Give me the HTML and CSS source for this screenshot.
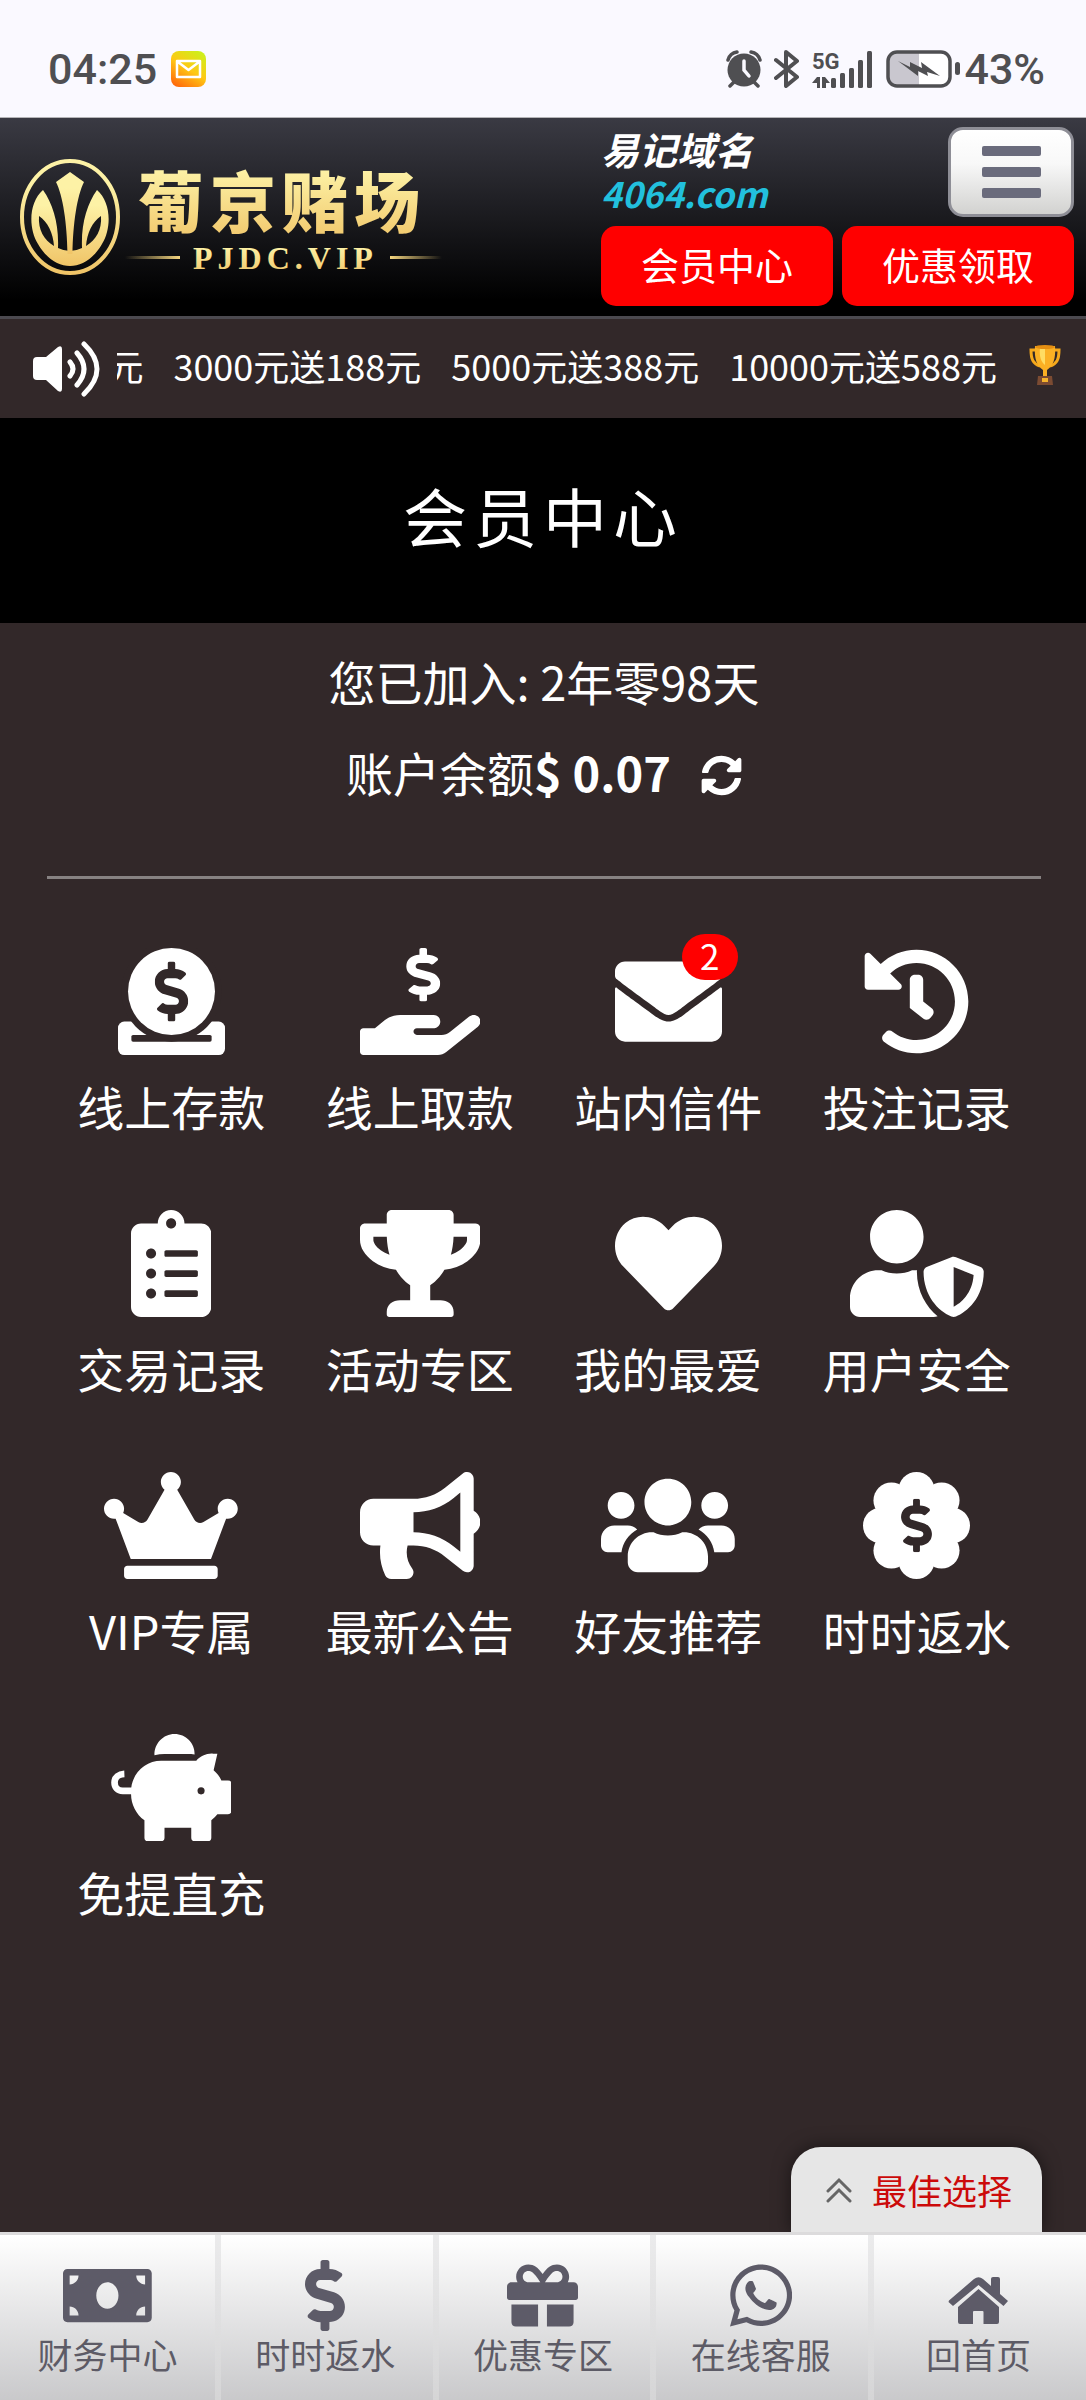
FILE: index.html
```html
<!DOCTYPE html>
<html lang="zh-CN">
<head>
  <meta charset="UTF-8">
  <meta name="viewport" content="width=device-width, initial-scale=1.0">
  <title>会员中心</title>
  <link rel="stylesheet" href="styles.css">
</head>
<body>
  <svg class="sprite" aria-hidden="true">
    <symbol id="dollar" viewBox="0 0 288 512" preserveAspectRatio="none"><path d="M209.2 233.4l-108-31.6C88.7 198.2 80 186.5 80 173.5c0-16.3 13.2-29.5 29.5-29.5h66.3c12.2 0 24.2 3.7 34.2 10.5 6.1 4.1 14.3 3.1 19.5-2l34.8-34c7.1-6.9 6.1-18.4-1.8-24.5C238 74.8 207.4 64.1 176 64V16c0-8.800-7.200-16-16-16h-32c-8.800 0-16 7.200-16 16v48h-2.500C45.800 64-5.400 118.700.500 183.600c4.200 46.100 39.400 83.600 83.800 96.600l102.500 30c12.500 3.700 21.200 15.300 21.200 28.300 0 16.300-13.200 29.500-29.500 29.500h-66.300C100 368 88 364.300 78 357.500c-6.100-4.100-14.300-3.100-19.500 2l-34.800 34c-7.100 6.900-6.100 18.400 1.800 24.500 24.500 19.200 55.100 29.900 86.500 30v48c0 8.800 7.200 16 16 16h32c8.800 0 16-7.200 16-16v-48.200c46.600-.9 90.300-28.600 105.700-72.700 21.500-61.600-14.600-124.800-72.500-141.700z"/></symbol>
  </svg>

  <div class="status-bar">
    <div class="status-left">
      <span>04:25</span>
      <svg width="35" height="36" viewBox="0 0 35 36">
        <defs>
          <linearGradient id="mailBg" x1="0.2" y1="1" x2="0.8" y2="0">
            <stop offset="0" stop-color="#ff6a0c"/>
            <stop offset="0.5" stop-color="#ffc814"/>
            <stop offset="1" stop-color="#cdf01c"/>
          </linearGradient>
        </defs>
        <rect width="35" height="36" rx="8" fill="url(#mailBg)"/>
        <path d="M6 10h23v16H6zM7 11l10.500 8L28 11" fill="none" stroke="#fff" stroke-width="2.500" stroke-linejoin="round"/>
      </svg>
    </div>
    <div class="status-right">
      <svg width="36" height="38" viewBox="0 0 36 38">
        <circle cx="18" cy="20" r="16.500"/>
        <path d="M2 10Q4 3 11 2M34 10Q32 3 25 2M8 32l-4 4M28 32l4 4" fill="none" stroke="#4f4f52" stroke-width="3.500" stroke-linecap="round"/>
        <path d="M18 11v9l5 6" fill="none" stroke="#faf9ff" stroke-width="3.500" stroke-linecap="round"/>
      </svg>
      <svg width="26" height="38" viewBox="0 0 26 38"><path d="M2 10l21 17-11 9V2l11 9L2 28" fill="none" stroke="#4f4f52" stroke-width="4" stroke-linejoin="round" stroke-linecap="round"/></svg>
      <svg width="62" height="38" viewBox="0 0 62 38">
        <text x="0" y="19" class="net-type">5G</text>
        <path d="M0 33l5-6h3v11H5v-5zM10 27h3l5 6h-4v5h-4z"/>
        <rect x="19" y="28" width="5" height="10" rx="1.500"/>
        <rect x="28" y="23" width="5" height="15" rx="1.500"/>
        <rect x="37" y="18" width="5" height="20" rx="1.500"/>
        <rect x="46" y="10" width="5" height="28" rx="1.500"/>
        <rect x="55" y="1" width="5" height="37" rx="1.500"/>
      </svg>
      <svg class="battery" width="76" height="38" viewBox="0 0 76 38">
        <rect x="2" y="2" width="62" height="34" rx="9" fill="#fff"/>
        <path d="M33 2H11a9 9 0 0 0-9 9v16a9 9 0 0 0 9 9h22z" fill="#c9c7cf"/>
        <rect x="2" y="2" width="62" height="34" rx="9" fill="none" stroke="#4f4f52" stroke-width="3.500"/>
        <rect x="69" y="12" width="5" height="13" rx="2.500"/>
        <path d="M12 11l12 6v-5l12 6-1-6 19 14-13-4 1 4-10-5v5z"/>
      </svg>
      <span>43%</span>
    </div>
  </div>

  <header class="header">
    <a class="logo" href="#">
      <svg width="450" height="198" viewBox="0 0 450 198">
        <defs>
          <linearGradient id="gold" x1="0" y1="0" x2="0" y2="1">
            <stop offset="0.2" stop-color="#fdf2a6"/>
            <stop offset="1" stop-color="#f0c467"/>
          </linearGradient>
          <linearGradient id="lineL"><stop offset="0" stop-color="#f5d680" stop-opacity="0"/><stop offset="1" stop-color="#f5d680"/></linearGradient>
          <linearGradient id="lineR"><stop offset="0" stop-color="#f5d680"/><stop offset="1" stop-color="#f5d680" stop-opacity="0"/></linearGradient>
        </defs>
        <ellipse cx="70" cy="99" rx="48" ry="56" fill="none" stroke="url(#gold)" stroke-width="4"/>
        <path fill="url(#gold)" d="M43 72C29 84 28 110 38 126C46 140 58 148 70 148C82 148 94 140 102 126C112 110 111 84 97 72C87 86 81 106 82 130Q70 136 58 130C59 106 53 86 43 72z"/>
        <path fill="#17171a" d="M39 98C38 112 44 122 54 128C53 115 48 104 39 98zM101 98C102 112 96 122 86 128C87 115 92 104 101 98z"/>
        <path fill="url(#gold)" d="M70 54L84 64C77 78 73 105 72.500 136H67.500C67 105 63 78 56 64z"/>
        <text class="logo-name" x="138" y="109" fill="url(#gold)">葡京赌场</text>
        <text class="logo-domain" x="193" y="151" fill="url(#gold)">PJDC.VIP</text>
        <rect x="125" y="138" width="55" height="3" fill="url(#lineL)"/>
        <rect x="390" y="138" width="52" height="3" fill="url(#lineR)"/>
      </svg>
    </a>
    <div class="header-side">
      <div class="header-top">
        <div class="domain">
          <div>易记域名</div>
          <div class="domain-url">4064.com</div>
        </div>
        <button class="menu-btn" type="button" aria-label="菜单"><span></span><span></span><span></span></button>
      </div>
      <div class="header-links">
        <a class="red-btn" href="#">会员中心</a>
        <a class="red-btn" href="#">优惠领取</a>
      </div>
    </div>
  </header>

  <div class="notice">
    <svg width="68" height="56" viewBox="0 0 68 56">
      <path fill="#fff" d="M4 16h9L25 6q4-2 4 2v40q0 4-4 2L13 39H4q-4 0-4-4V20q0-4 4-4z"/>
      <path fill="none" stroke="#fff" stroke-width="5" stroke-linecap="round" d="M37 21q6 7 0 14M44 12q14 16 0 32M51 3q26 25 0 50"/>
    </svg>
    <div class="notice-text">
      <span>元</span>
      <span>3000元送188元</span>
      <span>5000元送388元</span>
      <span>10000元送588元</span>
      <svg width="36" height="42" viewBox="0 0 36 42">
        <path d="M9 6H4c0 9 2 14 9 16M27 6h5c0 9-2 14-9 16" fill="none" stroke="#f5a81c" stroke-width="3"/>
        <path d="M8 2h20c1 13-2 20-8 24v7h-4v-7C10 22 7 15 8 2z" fill="#fbb024"/>
        <path d="M13 4h5v17c-4-3-6-9-5-17z" fill="#ffdc62"/>
        <ellipse cx="18" cy="3" rx="10" ry="2" fill="#e58f12"/>
        <path d="M11 32h14l1 9H10z" fill="#7c4b32"/>
        <rect x="15" y="34" width="6" height="4" fill="#f6b32c"/>
      </svg>
    </div>
  </div>

  <h1 class="page-title">会员中心</h1>

  <main class="content">
    <p class="info">您已加入: 2年零98天</p>
    <p class="info">账户余额<b>$ 0.07</b>
      <button class="refresh" type="button" aria-label="刷新">
        <svg width="41" height="41" viewBox="0 0 512 512"><path d="M370.720 133.280C339.458 104.008 298.888 87.962 255.848 88c-77.458.068-144.328 53.178-162.791 126.850-1.344 5.363-6.122 9.150-11.651 9.150H24.103c-7.498 0-13.194-6.807-11.807-14.176C33.933 94.924 134.813 8 256 8c66.448 0 126.791 26.136 171.315 68.685L463.030 40.970C478.149 25.851 504 36.559 504 57.941V192c0 13.255-10.745 24-24 24H345.941c-21.382 0-32.090-25.851-16.971-40.971l41.750-41.749zM32 296h134.059c21.382 0 32.090 25.851 16.971 40.971l-41.750 41.750c31.262 29.273 71.835 45.319 114.876 45.280 77.418-.07 144.315-53.144 162.787-126.849 1.344-5.363 6.122-9.150 11.651-9.150h57.304c7.498 0 13.194 6.807 11.807 14.176C478.067 417.076 377.187 504 256 504c-66.448 0-126.791-26.136-171.315-68.685L48.970 471.030C33.851 486.149 8 475.441 8 454.059V320c0-13.255 10.745-24 24-24z"/></svg>
      </button>
    </p>
    <hr class="divider">

    <nav class="menu">
      <a class="menu-item" href="#">
        <svg viewBox="0 0 512 512">
          <rect y="352" width="512" height="160" rx="30"/>
          <circle class="cut" cx="256" cy="208" r="240"/>
          <rect class="cut" x="64" y="416" width="384" height="32" rx="8"/>
          <path d="M138 416h236v-20H138z" class="cut"/>
          <circle cx="256" cy="208" r="208"/>
          <use class="cut" href="#dollar" x="176" y="64" width="160" height="288"/>
        </svg>
        <span>线上存款</span>
      </a>
      <a class="menu-item" href="#">
        <svg viewBox="0 0 576 512">
          <path d="M565.300 328.100c-11.800-10.700-30.200-10-42.600 0L430.300 402c-11.300 9.100-25.400 14-40 14H272c-8.800 0-16-7.200-16-16s7.200-16 16-16h78.300c15.900 0 30.700-10.900 33.300-26.600 3.300-20-12.100-37.400-31.600-37.400H192c-27 0-53.100 9.300-74.100 26.300L71.400 384H16c-8.800 0-16 7.200-16 16v96c0 8.800 7.200 16 16 16h356.800c14.500 0 28.600-4.900 40-14L564 377c15.200-12.100 16.400-35.300 1.300-48.900z"/>
          <use href="#dollar" x="221" y="0" width="163" height="256"/>
        </svg>
        <span>线上取款</span>
      </a>
      <a class="menu-item" href="#">
        <div class="icon-wrap">
          <svg viewBox="0 0 512 512"><path d="M502.300 190.800c3.900-3.100 9.700-.2 9.700 4.700V400c0 26.500-21.500 48-48 48H48c-26.500 0-48-21.500-48-48V195.600c0-5 5.700-7.800 9.700-4.700 22.400 17.400 52.100 39.500 154.100 113.600 21.100 15.400 56.700 47.800 92.200 47.600 35.700.3 72-32.800 92.300-47.600 102-74.100 131.600-96.300 154-113.700zM256 320c23.200.4 56.600-29.200 73.400-41.400 132.700-96.300 142.800-104.700 173.400-128.700 5.800-4.500 9.200-11.500 9.200-18.900v-19c0-26.500-21.500-48-48-48H48c-26.500 0-48 21.500-48 48v19c0 7.400 3.400 14.300 9.200 18.900 30.600 23.900 40.700 32.400 173.400 128.700 16.800 12.200 50.200 41.800 73.400 41.400z"/></svg>
          <i class="badge">2</i>
        </div>
        <span>站内信件</span>
      </a>
      <a class="menu-item" href="#">
        <svg viewBox="0 0 512 512"><path d="M504 255.531c.253 136.640-111.180 248.372-247.820 248.468-59.015.042-113.223-20.530-155.822-54.911-11.077-8.940-11.905-25.541-1.839-35.607l11.267-11.267c8.609-8.609 22.353-9.551 31.891-1.984C173.062 425.135 212.781 440 256 440c101.705 0 184-82.311 184-184 0-101.705-82.311-184-184-184-48.814 0-93.149 18.969-126.068 49.932l50.754 50.754c10.080 10.080 2.941 27.314-11.313 27.314H24c-8.837 0-16-7.163-16-16V38.627c0-14.254 17.234-21.393 27.314-11.314l49.372 49.372C129.209 34.136 189.552 8 256 8c136.810 0 247.747 110.780 248 247.531zm-180.912 78.784l9.823-12.630c8.138-10.463 6.253-25.542-4.210-33.679L288 256.349V152c0-13.255-10.745-24-24-24h-16c-13.255 0-24 10.745-24 24v135.651l65.409 50.874c10.463 8.137 25.541 6.253 33.679-4.210z"/></svg>
        <span>投注记录</span>
      </a>
      <a class="menu-item" href="#">
        <svg viewBox="0 0 384 512"><path d="M336 64h-80c0-35.300-28.700-64-64-64s-64 28.700-64 64H48C21.500 64 0 85.500 0 112v352c0 26.500 21.500 48 48 48h288c26.500 0 48-21.500 48-48V112c0-26.500-21.500-48-48-48zM96 424c-13.300 0-24-10.700-24-24s10.700-24 24-24 24 10.700 24 24-10.700 24-24 24zm0-96c-13.300 0-24-10.700-24-24s10.700-24 24-24 24 10.700 24 24-10.700 24-24 24zm0-96c-13.300 0-24-10.700-24-24s10.700-24 24-24 24 10.700 24 24-10.700 24-24 24zm96-192c13.300 0 24 10.700 24 24s-10.700 24-24 24-24-10.700-24-24 10.700-24 24-24zm128 368c0 4.400-3.600 8-8 8H168c-4.400 0-8-3.600-8-8v-16c0-4.400 3.600-8 8-8h144c4.400 0 8 3.600 8 8v16zm0-96c0 4.400-3.600 8-8 8H168c-4.400 0-8-3.600-8-8v-16c0-4.400 3.600-8 8-8h144c4.400 0 8 3.600 8 8v16zm0-96c0 4.400-3.600 8-8 8H168c-4.400 0-8-3.600-8-8v-16c0-4.400 3.600-8 8-8h144c4.400 0 8 3.600 8 8v16z"/></svg>
        <span>交易记录</span>
      </a>
      <a class="menu-item" href="#">
        <svg viewBox="0 0 576 512"><path d="M552 64H448V24c0-13.300-10.700-24-24-24H152c-13.300 0-24 10.700-24 24v40H24C10.700 64 0 74.700 0 88v56c0 35.700 22.500 72.400 61.900 100.700 31.500 22.700 69.800 37.100 110 41.700C203.300 338.500 240 360 240 360v72h-48c-35.300 0-64 20.700-64 56v12c0 6.600 5.400 12 12 12h296c6.600 0 12-5.400 12-12v-12c0-35.300-28.700-56-64-56h-48v-72s36.700-21.500 68.100-73.600c40.300-4.600 78.600-19 110-41.700 39.300-28.300 61.900-65 61.900-100.700V88c0-13.300-10.700-24-24-24zM99.300 192.800C74.900 175.200 64 155.600 64 144v-16h64.200c1 32.600 5.800 61.200 12.800 86.200-15.100-5.200-29.200-12.400-41.700-21.400zM512 144c0 16.100-17.700 36.100-35.300 48.800-12.500 9-26.700 16.200-41.800 21.400 7-25 11.800-53.600 12.800-86.200H512v16z"/></svg>
        <span>活动专区</span>
      </a>
      <a class="menu-item" href="#">
        <svg viewBox="0 0 512 512"><path d="M462.300 62.600C407.500 15.900 326 24.300 275.700 76.200L256 96.500l-19.700-20.300C186.100 24.300 104.500 15.900 49.700 62.600c-62.800 53.600-66.100 149.800-9.900 207.900l193.500 199.800c12.500 12.900 32.800 12.900 45.300 0l193.500-199.800c56.300-58.100 53-154.300-9.800-207.900z"/></svg>
        <span>我的最爱</span>
      </a>
      <a class="menu-item" href="#">
        <svg viewBox="0 0 640 512"><path d="M622.300 271.100l-115.200-45c-4.100-1.600-12.600-3.700-22.200 0l-115.200 45c-10.700 4.200-17.700 14-17.700 24.900 0 111.600 68.700 188.800 132.900 213.900 9.600 3.700 18 1.600 22.200 0C558.400 489.900 640 420.500 640 296c0-10.900-7-20.700-17.700-24.900zM496 462.400V273.300l95.500 37.300c-5.600 87.100-60.900 135.400-95.500 151.800zM224 256c70.700 0 128-57.300 128-128S294.700 0 224 0 96 57.300 96 128s57.300 128 128 128zm96 40c0-2.500.8-4.800 1.100-7.200-2.500-.1-4.900-.8-7.500-.8h-16.700c-22.200 10.200-46.900 16-72.900 16s-50.600-5.800-72.900-16h-16.700C60.200 288 0 348.200 0 422.400V464c0 26.500 21.500 48 48 48h352c6.800 0 13.300-1.500 19.200-4-54-42.900-99.200-116.700-99.200-212z"/></svg>
        <span>用户安全</span>
      </a>
      <a class="menu-item" href="#">
        <svg viewBox="0 0 640 512"><path d="M528 448H112c-8.800 0-16 7.200-16 16v32c0 8.800 7.200 16 16 16h416c8.800 0 16-7.200 16-16v-32c0-8.800-7.200-16-16-16zm64-320c-26.500 0-48 21.500-48 48 0 7.100 1.600 13.700 4.400 19.800L476 239.200c-15.400 9.200-35.300 4-44.200-11.600L350.300 85C361 76.200 368 63 368 48c0-26.500-21.500-48-48-48s-48 21.500-48 48c0 15 7 28.200 17.700 37l-81.500 142.600c-8.900 15.600-28.900 20.800-44.200 11.600l-72.300-43.400c2.700-6 4.400-12.700 4.400-19.800 0-26.500-21.500-48-48-48S0 149.500 0 176s21.500 48 48 48c2.600 0 5.200-.4 7.700-.8L128 416h384l72.300-192.800c2.500.4 5.100.8 7.700.8 26.500 0 48-21.500 48-48s-21.500-48-48-48z"/></svg>
        <span>VIP专属</span>
      </a>
      <a class="menu-item" href="#">
        <svg viewBox="0 0 576 512"><path d="M576 240c0-23.630-12.950-44.040-32-55.120V32.010C544 23.260 537.020 0 512 0c-7.120 0-14.190 2.380-19.980 7.020l-85.030 68.030C364.280 109.190 310.660 128 256 128H64c-35.350 0-64 28.650-64 64v96c0 35.350 28.650 64 64 64h33.700c-1.390 10.480-2.180 21.140-2.180 32 0 39.770 9.260 77.350 25.560 110.940 5.190 10.690 16.520 17.060 28.400 17.060h74.280c26.050 0 41.690-29.840 25.900-50.560-16.400-21.520-26.150-48.360-26.150-77.440 0-11.110 1.620-21.790 4.410-32H256c54.660 0 108.280 18.810 150.980 52.950l85.030 68.030a32.023 32.023 0 0 0 19.980 7.020c24.920 0 32-22.780 32-32V295.130C563.050 284.040 576 263.630 576 240zm-96 141.420l-33.050-26.440C392.950 311.780 325.120 288 256 288v-96c69.120 0 136.950-23.780 190.950-66.980L480 98.580v282.840z"/></svg>
        <span>最新公告</span>
      </a>
      <a class="menu-item" href="#">
        <svg viewBox="0 0 640 512"><path d="M96 224c35.300 0 64-28.700 64-64s-28.700-64-64-64-64 28.700-64 64 28.700 64 64 64zm448 0c35.300 0 64-28.700 64-64s-28.700-64-64-64-64 28.700-64 64 28.700 64 64 64zm32 32h-64c-17.600 0-33.500 7.100-45.100 18.600 40.300 22.100 68.900 62 75.100 109.400h66c17.700 0 32-14.300 32-32v-32c0-35.300-28.700-64-64-64zm-256 0c61.900 0 112-50.100 112-112S381.900 32 320 32 208 82.100 208 144s50.100 112 112 112zm76.800 32h-8.300c-20.800 10-43.900 16-68.500 16s-47.600-6-68.500-16h-8.300C179.600 288 128 339.600 128 403.200V432c0 26.500 21.500 48 48 48h288c26.500 0 48-21.500 48-48v-28.800c0-63.600-51.600-115.200-115.200-115.200zm-223.700-13.400C161.500 263.100 145.600 256 128 256H64c-35.300 0-64 28.700-64 64v32c0 17.700 14.300 32 32 32h65.900c6.300-47.400 34.900-87.300 75.200-109.400z"/></svg>
        <span>好友推荐</span>
      </a>
      <a class="menu-item" href="#">
        <svg viewBox="0 0 512 512">
          <circle cx="256" cy="256" r="180"/>
          <circle cx="256" cy="86" r="86"/><circle cx="256" cy="426" r="86"/>
          <circle cx="86" cy="256" r="86"/><circle cx="426" cy="256" r="86"/>
          <circle cx="136" cy="136" r="86"/><circle cx="376" cy="136" r="86"/>
          <circle cx="136" cy="376" r="86"/><circle cx="376" cy="376" r="86"/>
          <use class="cut" href="#dollar" x="182" y="128" width="148" height="256"/>
        </svg>
        <span>时时返水</span>
      </a>
      <a class="menu-item" href="#">
        <svg viewBox="0 0 576 512">
          <path d="M208 102C206 46 250 0 304 0s98 44 96 98c-5-1-10-2-16-2H256c-16 0-32 2-48 6z"/>
          <path d="M240 128h168c20-22 48-36 80-34h21l-18 79c16 14 29 30 37 49h32q16 0 16 16v130q0 16-16 16h-51q-12 16-29 29v83q0 16-16 16h-64q-16 0-16-16v-48H256v48q0 16-16 16h-64q-16 0-16-16v-83C120 384 96 336 96 288C90 196 160 128 240 128z"/>
          <path d="M100 272H56C32 272 17 255 17 232C17 208 38 192 64 191" fill="none" stroke="#fff" stroke-width="32"/>
          <circle class="cut" cx="431" cy="272" r="17"/>
        </svg>
        <span>免提直充</span>
      </a>
    </nav>
  </main>

  <footer class="footer">
    <button class="best" type="button">
      <svg width="26" height="26" viewBox="0 0 26 26"><path d="M2 14L13 3l11 11M2 24l11-11 11 11" fill="none" stroke="#666" stroke-width="3" stroke-linecap="round"/></svg>
      最佳选择
    </button>
    <nav class="tabs">
      <a class="tab" href="#">
        <svg viewBox="0 0 640 512"><path d="M608 64H32C14 64 0 78 0 96v320c0 18 14 32 32 32h576c18 0 32-14 32-32V96c0-18-14-32-32-32zM48 400v-64c35 0 64 29 64 64H48zm0-224v-64h64c0 35-29 64-64 64zm272 176c-44 0-80-43-80-96s36-96 80-96 80 43 80 96-36 96-80 96zm272 48h-64c0-35 29-64 64-64v64zm0-224c-35 0-64-29-64-64h64v64z"/></svg>
        <span>财务中心</span>
      </a>
      <a class="tab" href="#">
        <svg viewBox="0 0 288 512"><use href="#dollar" width="288" height="512"/></svg>
        <span>时时返水</span>
      </a>
      <a class="tab" href="#">
        <svg viewBox="0 0 512 512"><path d="M32 448c0 17.700 14.300 32 32 32h160V320H32v128zm256 32h160c17.700 0 32-14.300 32-32V320H288v160zm192-320h-42.100c6.200-12.100 10.100-25.500 10.100-40 0-48.500-39.500-88-88-88-41.600 0-68.500 21.300-103 68.300-34.500-47-61.400-68.300-103-68.300-48.500 0-88 39.500-88 88 0 14.500 3.800 27.900 10.100 40H32c-17.700 0-32 14.300-32 32v80c0 8.800 7.200 16 16 16h480c8.800 0 16-7.200 16-16v-80c0-17.700-14.300-32-32-32zm-326.100 0c-22.100 0-40-17.900-40-40s17.900-40 40-40c19.900 0 34.600 3.300 86.100 80h-86.100zm206.100 0h-86.100c51.400-76.500 65.700-80 86.100-80 22.100 0 40 17.900 40 40s-17.900 40-40 40z"/></svg>
        <span>优惠专区</span>
      </a>
      <a class="tab" href="#">
        <svg viewBox="0 0 448 512"><path d="M380.900 97.100C339 55.100 283.200 32 223.900 32c-122.400 0-222 99.600-222 222 0 39.100 10.200 77.300 29.600 111L0 480l117.700-30.900c32.400 17.700 68.900 27 106.100 27h.1c122.300 0 224.100-99.600 224.100-222 0-59.300-25.200-115-67.100-157zm-157 341.600c-33.200 0-65.700-8.900-94-25.700l-6.700-4-69.800 18.300L72 359.200l-4.400-7c-18.500-29.400-28.200-63.300-28.200-98.200 0-101.700 82.800-184.500 184.600-184.500 49.300 0 95.600 19.200 130.400 54.100 34.800 34.900 56.200 81.200 56.100 130.500 0 101.800-84.900 184.600-186.600 184.600zm101.200-138.200c-5.500-2.800-32.800-16.200-37.900-18-5.100-1.900-8.800-2.800-12.500 2.800-3.700 5.600-14.300 18-17.600 21.800-3.200 3.700-6.500 4.200-12 1.400-32.600-16.300-54-29.100-75.500-66-5.700-9.800 5.700-9.100 16.300-30.300 1.800-3.700.9-6.900-.5-9.700-1.400-2.800-12.500-30.100-17.100-41.200-4.500-10.800-9.100-9.300-12.500-9.500-3.200-.2-6.900-.2-10.600-.2-3.700 0-9.700 1.400-14.800 6.900-5.100 5.600-19.400 19-19.400 46.300 0 27.300 19.900 53.700 22.600 57.400 2.800 3.700 39.100 59.700 94.800 83.800 35.200 15.200 49 16.500 66.600 13.900 10.700-1.600 32.800-13.400 37.400-26.400 4.600-13 4.600-24.100 3.200-26.400-1.300-2.500-5-3.900-10.500-6.600z"/></svg>
        <span>在线客服</span>
      </a>
      <a class="tab" href="#">
        <svg viewBox="0 -17 61 71"><path d="M1 23.500L26 2q4.500-3.500 9 0l8 7V2q0-2 2-2h5q2 0 2 2v15l8 7-4.500 5L30.500 8 5 29 .5 25zM30.500 12L51 30v15q0 2-2 2H35.500V35q0-1-1-1H26q-1 0-1 1v12H12q-2 0-2-2V30z"/></svg>
        <span>回首页</span>
      </a>
    </nav>
  </footer>
</body>
</html>
```
FILE: styles.css
```css
* {
  box-sizing: border-box;
}

body {
  margin: 0;
  min-height: 100vh;
  display: flex;
  flex-direction: column;
  background-color: #322829;
  color: #fff;
  font-family: "Noto Sans CJK SC", sans-serif;
}

a {
  color: inherit;
  text-decoration: none;
}

button {
  font-family: inherit;
  cursor: pointer;
}

svg {
  display: block;
  flex-shrink: 0;
}

.sprite {
  position: absolute;
  width: 0;
  height: 0;
}

/* status bar */
.status-bar {
  display: flex;
  justify-content: space-between;
  align-items: center;
  height: 118px;
  padding: 20px 41px 0 48px;
  background-color: #faf9ff;
  border-bottom: 1px solid #b5b5b8;
  color: #4f4f52;
  fill: #4f4f52;
  font-family: Roboto, sans-serif;
  font-size: 43px;
  font-weight: 500;
}

.status-left,
.status-right {
  display: flex;
  align-items: center;
}

.status-left {
  gap: 14px;
}

.status-right {
  gap: 12px;
}

.battery {
  margin-right: -10px;
}

.net-type {
  font-size: 22px;
  font-weight: 700;
}

/* header */
.header {
  display: flex;
  justify-content: space-between;
  border-bottom: 3px solid #4b494f;
  background: linear-gradient(#3a3a43, #000 92%);
}

.logo-name {
  font-size: 66px;
  font-weight: 900;
  letter-spacing: 6px;
}

.logo-domain {
  font-family: "Liberation Serif", serif;
  font-size: 32px;
  font-weight: 700;
  letter-spacing: 5px;
}

.header-side {
  flex: 0 0 485px;
  padding: 9px 12px 9px 0;
}

.header-top {
  display: flex;
  justify-content: space-between;
  margin-bottom: 9px;
}

.domain {
  font-size: 38px;
  font-weight: 700;
  font-style: italic;
  line-height: 44px;
}

.domain-url {
  color: #22c0dd;
  font-size: 35px;
}

.menu-btn {
  display: flex;
  flex-direction: column;
  justify-content: center;
  align-items: center;
  gap: 11px;
  width: 126px;
  height: 90px;
  padding: 0;
  border: 3px solid #8e8e96;
  border-radius: 15px;
  background: linear-gradient(#fff, #f8f8f8 40%, #d2d2d0);
}

.menu-btn span {
  width: 59px;
  height: 10px;
  border-radius: 2px;
  background-color: #6a6b7c;
}

.header-links {
  display: flex;
  gap: 9px;
}

.red-btn {
  flex: 1;
  padding-bottom: 4px;
  border-radius: 15px;
  background-color: #f00;
  font-size: 38px;
  line-height: 76px;
  text-align: center;
}

/* scrolling notice */
.notice {
  display: flex;
  align-items: center;
  gap: 16px;
  height: 99px;
  padding: 0 23px 0 33px;
}

.notice-text {
  flex: 1;
  display: flex;
  align-items: center;
  justify-content: flex-end;
  gap: 30px;
  padding-bottom: 8px;
  overflow: hidden;
  font-size: 36px;
  white-space: nowrap;
}

.page-title {
  margin: 0;
  padding-bottom: 12px;
  background-color: #000;
  font-size: 64px;
  font-weight: 400;
  letter-spacing: 6px;
  line-height: 193px;
  text-align: center;
}

/* member center */
.content {
  padding: 12px 45px 0 47px;
}

.info {
  display: flex;
  justify-content: center;
  align-items: center;
  margin: 0;
  font-size: 47px;
  line-height: 91px;
}

.info b {
  white-space: pre;
}

.refresh {
  margin-left: 30px;
  padding: 8px 0 0;
  border: 0;
  background: none;
  fill: #fff;
}

.divider {
  margin: 59px 0 69px;
  border: 0;
  border-top: 3px solid #878282;
}

.menu {
  display: grid;
  grid-template-columns: repeat(4, 1fr);
  row-gap: 73px;
}

.menu-item {
  display: flex;
  flex-direction: column;
  align-items: center;
  gap: 20px;
  fill: #fff;
  font-size: 47px;
  line-height: 62px;
}

.menu-item svg {
  height: 107px;
}

.menu-item .cut {
  fill: #322829;
}

.icon-wrap {
  position: relative;
}

.badge {
  position: absolute;
  top: -14px;
  right: -16px;
  width: 56px;
  padding-bottom: 4px;
  border-radius: 23px;
  background-color: #f00;
  font-size: 35px;
  font-style: normal;
  line-height: 42px;
  text-align: center;
}

/* bottom bar */
.footer {
  display: flex;
  flex-direction: column;
  margin-top: auto;
}

.best {
  display: flex;
  align-items: center;
  align-self: flex-end;
  gap: 20px;
  height: 85px;
  margin-right: 44px;
  padding: 0 30px 0 35px;
  border: 0;
  border-radius: 30px 30px 0 0;
  background-color: #e6e6e6;
  box-shadow: 0 0 18px rgba(0, 0, 0, 0.5);
  color: #cc0a0a;
  font-size: 35px;
}

.tabs {
  position: relative;
  display: flex;
  border-top: 3px solid #dcdbdc;
}

.tab {
  flex: 1;
  display: flex;
  flex-direction: column;
  align-items: center;
  padding: 25px 0 23px;
  background: linear-gradient(#fff, #c9c9cb);
  color: #5d5b66;
  fill: #5d5b68;
  font-size: 35px;
  line-height: 46px;
}

.tab + .tab {
  padding-left: 3px;
  background:
    linear-gradient(#ebebec, #d5d5d6) left / 6px 100% no-repeat,
    linear-gradient(#fff, #c9c9cb);
}

.tab svg {
  height: 71px;
}
```
